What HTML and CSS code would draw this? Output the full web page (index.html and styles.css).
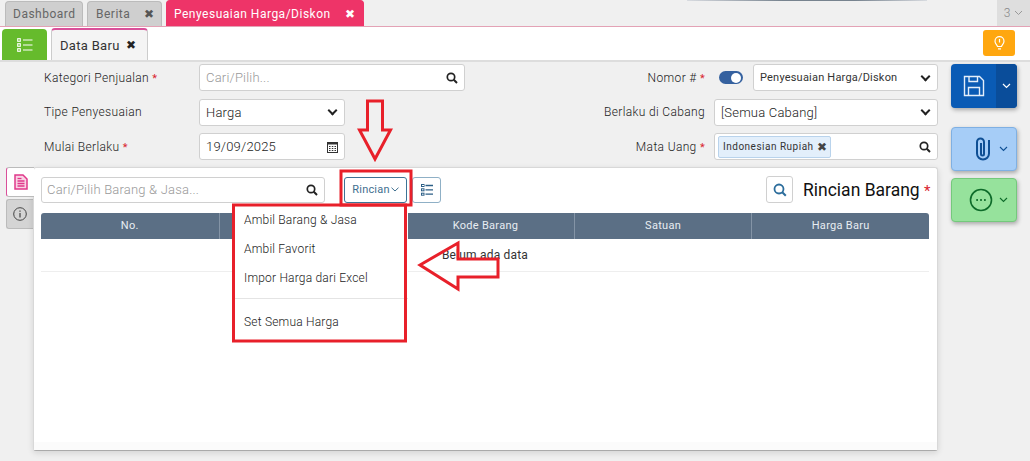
FILE: index.html
```html
<!DOCTYPE html>
<html lang="en">
<head>
  <title>Penyesuaian Harga/Diskon</title>
  <meta charset="utf-8">
  <link rel="stylesheet" href="styles.css">
</head>
<body>

  <div class="tabbar">
    <div class="tab tab-dash">Dashboard</div>
    <div class="tab tab-news">Berita <span class="tab-x">&#10006;</span></div>
    <div class="tab tab-active">Penyesuaian Harga/Diskon <span class="tab-x">&#10006;</span></div>
    <div class="tab-count">3 <svg width="9" height="6" viewBox="0 0 9 6"><path d="M1 1l3.500 3.500L8 1" fill="none" stroke="#999" stroke-width="1"/></svg></div>
  </div>

  <div class="subbar">
    <div class="btn-list">
      <svg width="16" height="14" viewBox="0 0 16 14" fill="none" stroke="#fff" stroke-width="1.100">
        <rect x="0.700" y="0.700" width="2.600" height="2.600"/><rect x="0.700" y="5.700" width="2.600" height="2.600"/><rect x="0.700" y="10.700" width="2.600" height="2.600"/>
        <path d="M6 2h9.500M6 7h9.500M6 12h9.500"/>
      </svg>
    </div>
    <div class="subtab">Data Baru <span class="subtab-x">&#10006;</span></div>
    <div class="btn-idea">
      <svg width="11" height="14" viewBox="0 0 11 14" fill="none" stroke="#fff" stroke-width="1.200">
        <path d="M3.500 10.500C3.300 8.800 1 7.800 1 5.200a4.500 4.500 0 0 1 9 0c0 2.600-2.300 3.600-2.500 5.300z"/>
        <path d="M4 12.800h3M5.500 3v3.500"/>
      </svg>
    </div>
  </div>

  <div class="main">
    <div class="work">
      <div class="form">
        <label class="lbl">Kategori Penjualan <i>*</i></label>
        <div class="field field-wide">
          <span class="ph">Cari/Pilih...</span>
          <svg class="ico-search" width="12" height="12" viewBox="0 0 12 12"><circle cx="5" cy="5" r="3.700" fill="none" stroke="#222" stroke-width="1.700"/><path d="M7.800 7.800l3.200 3.200" stroke="#222" stroke-width="2"/></svg>
        </div>
        <label class="lbl lbl-right">Nomor # <i>*</i></label>
        <div class="nomor">
          <span class="toggle"><span class="knob"></span></span>
          <div class="field field-small">Penyesuaian Harga/Diskon <span class="caret"></span></div>
        </div>

        <label class="lbl">Tipe Penyesuaian</label>
        <div class="field field-short">Harga <span class="caret"></span></div>
        <label class="lbl lbl-right">Berlaku di Cabang</label>
        <div class="field">[Semua Cabang] <span class="caret"></span></div>

        <label class="lbl">Mulai Berlaku <i>*</i></label>
        <div class="field field-short">19/09/2025
          <svg class="ico-cal" width="11" height="12" viewBox="0 0 11 12"><rect x="0.500" y="1.500" width="10" height="10" fill="none" stroke="#333"/><path d="M0 1h11v2.500H0z" fill="#333"/><path d="M2 5.500h1.500M4.800 5.500h1.500M7.500 5.500H9M2 7.500h1.500M4.800 7.500h1.500M7.500 7.500H9M2 9.500h1.500M4.800 9.500h1.500M7.500 9.500H9" stroke="#333"/></svg>
        </div>
        <label class="lbl lbl-right">Mata Uang <i>*</i></label>
        <div class="field field-chip">
          <span class="chip">Indonesian Rupiah <span class="chip-x">&#10006;</span></span>
          <svg class="ico-search" width="12" height="12" viewBox="0 0 12 12"><circle cx="5" cy="5" r="3.700" fill="none" stroke="#222" stroke-width="1.700"/><path d="M7.800 7.800l3.200 3.200" stroke="#222" stroke-width="2"/></svg>
        </div>
      </div>

      <div class="panel">
        <div class="side-tabs">
          <div class="side-tab side-tab-on">
            <svg width="14" height="16" viewBox="0 0 14 16"><path d="M1 1h8l4 4v10H1z" fill="#f9d3e4" stroke="#e0388a" stroke-width="1.500"/><path d="M3.500 7h7M3.500 9.500h7M3.500 12h7" stroke="#e0388a" stroke-width="1.300"/><path d="M3.500 4.500h4" stroke="#e0388a" stroke-width="1.300"/></svg>
          </div>
          <div class="side-tab">
            <svg width="14" height="14" viewBox="0 0 14 14" fill="none" stroke="#444"><circle cx="7" cy="7" r="6.300"/><path d="M7 6v4.500M7 3.500v1.300" stroke-width="1.200"/></svg>
          </div>
        </div>

        <div class="card">
          <div class="toolbar">
            <div class="field field-search">
              <span class="ph">Cari/Pilih Barang &amp; Jasa...</span>
              <svg class="ico-search" width="12" height="12" viewBox="0 0 12 12"><circle cx="5" cy="5" r="3.700" fill="none" stroke="#222" stroke-width="1.700"/><path d="M7.800 7.800l3.200 3.200" stroke="#222" stroke-width="2"/></svg>
            </div>
            <div class="btn-rincian">Rincian<svg width="8" height="5" viewBox="0 0 8 5"><path d="M0.500 0.700L4 4l3.500-3.300" fill="none" stroke="#3f6f8f"/></svg></div>
            <div class="btn-view">
              <svg width="12" height="12" viewBox="0 0 12 12" stroke="#2c5f86" fill="none"><rect x="0.500" y="0.500" width="2.500" height="2"/><rect x="0.500" y="4.800" width="2.500" height="2"/><rect x="0.500" y="9.200" width="2.500" height="2"/><path d="M4.500 1.500H12M4.500 5.800H12M4.500 10.200H12" stroke-width="1.300"/></svg>
            </div>
            <div class="btn-find">
              <svg width="14" height="14" viewBox="0 0 14 14"><circle cx="6" cy="6" r="4.500" fill="none" stroke="#2c6d9c" stroke-width="1.800"/><path d="M9.300 9.300l3.500 3.500" stroke="#2c6d9c" stroke-width="2"/></svg>
            </div>
            <div class="card-title">Rincian Barang <i>*</i></div>
          </div>

          <div class="thead">
            <div>No.</div>
            <div></div>
            <div>Kode Barang</div>
            <div>Satuan</div>
            <div>Harga Baru</div>
          </div>
          <div class="empty">Belum ada data</div>
          <div class="card-foot"></div>

          <div class="menu">
            <div class="menu-item">Ambil Barang &amp; Jasa</div>
            <div class="menu-item">Ambil Favorit</div>
            <div class="menu-item">Impor Harga dari Excel</div>
            <div class="menu-sep"></div>
            <div class="menu-item">Set Semua Harga</div>
          </div>
        </div>
      </div>
    </div>

    <div class="actions">
      <div class="act act-save">
        <span class="act-main">
          <svg width="22" height="22" viewBox="0 0 22 22" fill="none" stroke="#e4eefa" stroke-width="1.400"><path d="M1.500 1.500h15l4 4v15h-19z"/><path d="M6 1.500v5h8.500v-5M5.500 20.500v-8h11v8"/></svg>
        </span>
        <span class="act-drop"><svg width="9" height="6" viewBox="0 0 9 6"><path d="M1 1l3.500 3.500L8 1" fill="none" stroke="#fff" stroke-width="1.200"/></svg></span>
      </div>
      <div class="act act-clip">
        <svg width="16" height="24" viewBox="0 0 16 24" fill="none" stroke="#0f4f94" stroke-width="2"><path d="M14 3v13.500a6 6 0 0 1-12 0V5a3.500 3.500 0 0 1 7 0v12a1.500 1.500 0 0 1-3 0V6"/></svg>
        <svg class="act-caret" width="9" height="6" viewBox="0 0 9 6"><path d="M1 1l3.500 3.500L8 1" fill="none" stroke="#0f4f94" stroke-width="1.100"/></svg>
      </div>
      <div class="act act-more">
        <svg width="24" height="24" viewBox="0 0 24 24" fill="none" stroke="#0e6b2a" stroke-width="1.600"><circle cx="12" cy="12" r="10.500"/><path d="M7.300 12h1.600M11.200 12h1.600M15.100 12h1.600" stroke-width="2.200"/></svg>
        <svg class="act-caret" width="9" height="6" viewBox="0 0 9 6"><path d="M1 1l3.500 3.500L8 1" fill="none" stroke="#0e6b2a" stroke-width="1.100"/></svg>
      </div>
    </div>
  </div>

  <!-- red annotations drawn over the screenshot -->
  <svg class="notes" width="1030" height="461" viewBox="0 0 1030 461" fill="none" stroke="#e8202a" stroke-width="3">
    <rect x="341" y="171" width="70" height="34"/>
    <rect x="233.500" y="205" width="172" height="136"/>
    <path d="M367.500 101h15v29h8L375 159l-15.500-29h8z"/>
    <path d="M420 265l38-22v16h40v18h-40v12z"/>
  </svg>

</body>
</html>
```

FILE: styles.css
```css
html, body {
  margin: 0;
  padding: 0;
  height: 100%;
}
body {
  display: flex;
  flex-direction: column;
  background: #f0f0f0;
  color: #333;
  font-family: Roboto, "Liberation Sans", sans-serif;
  font-size: 12px;
  font-weight: 300;
  overflow: hidden;
  position: relative;
}
i {
  color: #d9232e;
  font-style: normal;
  font-weight: 400;
}

/* top tabs */
.tabbar {
  position: relative;
  display: flex;
  align-items: flex-end;
  gap: 4px;
  height: 26px;
  padding-left: 5px;
  border-bottom: 1px solid #e3a2b5;
  flex: none;
}
.tabbar::before {
  content: "";
  position: absolute;
  left: 687px;
  top: 0;
  width: 240px;
  height: 1px;
  background: linear-gradient(90deg, #d8dbe0, #77838f 40%, #77838f 70%, #d8dbe0);
}
.tab {
  display: flex;
  align-items: center;
  justify-content: space-between;
  box-sizing: border-box;
  height: 25px;
  padding: 0 7px 0 7px;
  background: #cfcfcf;
  border: 1px solid #bbb;
  border-bottom: 0;
  border-radius: 4px 4px 0 0;
  color: #666;
  font-weight: 400;
  letter-spacing: 0.5px;
}
.tab-dash { width: 78px; }
.tab-news {
  width: 75px;
  padding-left: 8px;
}
.tab-active {
  width: 198px;
  padding-right: 8px;
  background: #ee3468;
  border-color: #ee3468;
  color: #fff;
  height: 26px;
}
.tab-x {
  font-size: 12px;
  color: #555;
}
.tab-active .tab-x { color: #fff; }
.tab-count {
  display: flex;
  align-items: center;
  justify-content: center;
  gap: 4px;
  box-sizing: border-box;
  align-self: stretch;
  width: 33px;
  margin-left: auto;
  background: #dedede;
  color: #888;
}

/* second row */
.subbar {
  display: flex;
  align-items: flex-end;
  height: 33px;
  padding-left: 2px;
  background: #fff;
  border-bottom: 2px solid #ddd;
  flex: none;
}
.btn-list {
  display: flex;
  align-items: center;
  justify-content: center;
  width: 45px;
  height: 31px;
  background: #66bb2c;
  border-radius: 4px 4px 0 0;
}
.subtab {
  display: flex;
  align-items: center;
  justify-content: space-between;
  box-sizing: border-box;
  width: 97px;
  height: 32px;
  margin-left: 4px;
  padding: 0 11px 0 8px;
  background: #f4f4f4;
  border: 1px solid #ccc;
  border-top: 2px solid #d9509a;
  border-bottom: 0;
  border-radius: 4px 4px 0 0;
  font-size: 13px;
  font-weight: 400;
  letter-spacing: 0.3px;
}
.subtab-x {
  font-size: 12px;
  color: #222;
}
.btn-idea {
  display: flex;
  align-items: center;
  justify-content: center;
  width: 32px;
  height: 26px;
  margin: 0 15px 4px auto;
  background: #ffa70f;
  border-radius: 3px;
}

/* main area */
.main {
  display: flex;
  flex: 1;
  min-height: 0;
  padding: 2px 0 10px 6px;
}
.work {
  display: flex;
  flex-direction: column;
  width: 932px;
}
.form {
  display: grid;
  grid-template-columns: 155px 266px 1fr 224px;
  grid-auto-rows: 27px;
  row-gap: 7.500px;
  align-items: center;
  padding-left: 38px;
  margin-bottom: 7px;
}
.lbl {
  color: #222;
  letter-spacing: 0.35px;
}
.lbl-right {
  text-align: right;
  padding-right: 9px;
}
.lbl i { font-size: 11px; }

.field {
  display: flex;
  align-items: center;
  justify-content: space-between;
  box-sizing: border-box;
  height: 27px;
  padding: 0 6px;
  background: #fff;
  border: 1px solid #d0d0d0;
  border-radius: 3px;
  font-size: 13px;
  color: #222;
  letter-spacing: 0.2px;
}
.field-short { width: 146px; }
.field-small {
  flex: 1;
  font-size: 11px;
  font-weight: 400;
  color: #333;
}
.ph { color: #999; }
.caret {
  width: 5px;
  height: 5px;
  margin: -3px 2px 0 0;
  border-right: 2px solid #222;
  border-bottom: 2px solid #222;
  transform: rotate(45deg);
}
.nomor {
  display: flex;
  align-items: center;
}
.toggle {
  display: flex;
  justify-content: flex-end;
  align-items: center;
  box-sizing: border-box;
  width: 24px;
  height: 13px;
  margin: 0 10px 0 5px;
  padding: 0 2px;
  background: #35619f;
  border-radius: 7px;
}
.knob {
  width: 10px;
  height: 10px;
  background: #fff;
  border-radius: 50%;
}
.field-chip { padding-left: 3px; }
.chip {
  display: flex;
  align-items: center;
  gap: 3px;
  height: 20px;
  padding: 0 3px 0 4px;
  background: #e3effb;
  border: 1px solid #b9d3ec;
  border-radius: 2px;
  font-size: 10px;
  font-weight: 400;
  letter-spacing: 0.5px;
  color: #333;
}
.chip-x {
  font-size: 12px;
  color: #444;
}

/* detail panel */
.panel {
  display: flex;
  flex: 1;
  min-height: 0;
}
.side-tabs {
  width: 27px;
  flex: none;
}
.side-tab {
  display: flex;
  align-items: center;
  justify-content: center;
  box-sizing: border-box;
  height: 30px;
  margin-bottom: 2px;
  background: #d4d4d4;
  border: 1px solid #bbb;
  border-right: 0;
  border-radius: 3px 0 0 3px;
}
.side-tab-on {
  background: #fff;
  border-left: 1px solid #d9509a;
  position: relative;
  z-index: 1;
  margin-right: -1px;
}
.card {
  position: relative;
  display: flex;
  flex-direction: column;
  flex: 1;
  box-sizing: border-box;
  padding: 8px 8px 0 7px;
  background: #fff;
  border: 1px solid #d8d8d8;
  border-bottom: 1px solid #aaa;
  border-radius: 3px;
  box-shadow: 0 2px 6px rgba(0,0,0,0.12);
}
.toolbar {
  display: flex;
  align-items: center;
  height: 27px;
  margin-bottom: 10px;
}
.field-search {
  width: 284px;
  height: 26px;
  padding-left: 5px;
}
.btn-rincian {
  display: flex;
  align-items: center;
  justify-content: center;
  gap: 1px;
  box-sizing: border-box;
  width: 63px;
  height: 26px;
  margin-left: 19px;
  background: #fff;
  border: 1px solid #3d7396;
  border-radius: 3px;
  font-size: 11px;
  font-weight: 400;
  letter-spacing: 0.2px;
  color: #3f6f8f;
}
.btn-view {
  display: flex;
  align-items: center;
  justify-content: center;
  box-sizing: border-box;
  width: 29px;
  height: 26px;
  margin-left: 5px;
  border: 1px solid #8fb0c6;
  border-radius: 3px;
}
.btn-find {
  display: flex;
  align-items: center;
  justify-content: center;
  box-sizing: border-box;
  width: 27px;
  height: 27px;
  margin-left: auto;
  border: 1px solid #d0d0d0;
  border-radius: 3px;
}
.card-title {
  width: 126px;
  margin-left: 10px;
  font-size: 17.500px;
  font-weight: 400;
  color: #111;
  white-space: nowrap;
}
.card-title i { font-size: 15px; }
.thead {
  display: grid;
  grid-template-columns: repeat(5, 1fr);
  height: 26px;
  background: #5b6f85;
  border-radius: 3px 3px 0 0;
  color: #e8edf2;
  font-size: 11px;
  font-weight: 400;
  letter-spacing: 0.3px;
  line-height: 26px;
  text-align: center;
  flex: none;
}
.thead div + div { border-left: 1px solid #8494a6; }
.empty {
  height: 32px;
  line-height: 33px;
  border-bottom: 1px solid #eee;
  text-align: center;
  letter-spacing: 0.2px;
  font-weight: 400;
  flex: none;
}
.card-foot {
  margin: auto -8px 0 -7px;
  height: 8px;
  background: #fbfbfb;
}

/* dropdown */
.menu {
  position: absolute;
  left: 200px;
  top: 38px;
  box-sizing: border-box;
  width: 174px;
  background: #fff;
  z-index: 2;
}
.menu-item {
  height: 29px;
  line-height: 29px;
  padding-left: 10px;
  font-size: 12px;
  letter-spacing: 0.2px;
  color: #222;
}
.menu-sep {
  margin: 5px 0 9px;
  border-top: 1px solid #e4e4e4;
}

/* right action buttons */
.actions {
  display: flex;
  flex-direction: column;
  width: 66px;
  margin-left: 13px;
}
.act {
  display: flex;
  align-items: center;
  box-sizing: border-box;
  width: 66px;
  height: 44px;
  border-radius: 4px;
  box-shadow: 1px 2px 4px rgba(0,0,0,0.3);
}
.act-save {
  background: #0a5bb5;
  overflow: hidden;
}
.act-main {
  display: flex;
  align-items: center;
  justify-content: center;
  width: 45px;
  height: 100%;
}
.act-drop {
  display: flex;
  align-items: center;
  justify-content: center;
  flex: 1;
  height: 100%;
  background: #0a4d9a;
}
.act-clip {
  justify-content: flex-end;
  gap: 8px;
  padding-right: 8px;
  margin-top: 19px;
  background: #a6cdf7;
  border: 1px solid #7fb0e3;
}
.act-more {
  justify-content: flex-end;
  gap: 6px;
  padding-right: 8px;
  margin-top: 7px;
  background: #96e29c;
  border: 1px solid #74c97c;
}

.notes {
  position: absolute;
  left: 0;
  top: 0;
  z-index: 5;
  pointer-events: none;
}
```
